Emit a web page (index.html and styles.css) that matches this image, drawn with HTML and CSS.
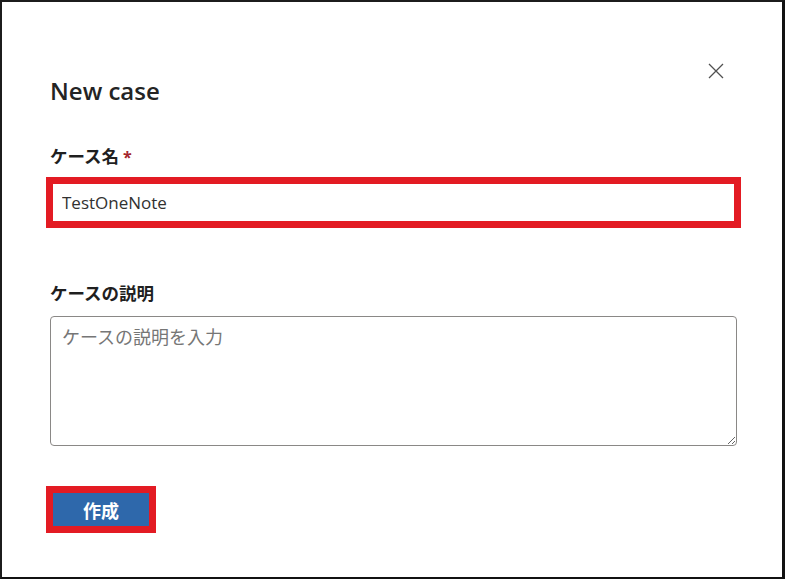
FILE: index.html
```html
<!DOCTYPE html>
<html lang="ja">
<head>
<meta charset="utf-8">
<title>New case</title>
<link rel="stylesheet" href="styles.css">
</head>
<body>
<div class="frame">
  <div class="header">
    <h1 class="title">New case</h1>
    <button class="close" aria-label="閉じる">
      <svg viewBox="0 0 16 16" width="16" height="16"><path d="M1 1L15 15M15 1L1 15" stroke="#505050" stroke-width="1.3" fill="none"/></svg>
    </button>
  </div>
  <label class="label label-name">ケース名 <span class="req">*</span></label>
  <input class="text-input highlight" type="text" value="TestOneNote">
  <label class="label label-desc">ケースの説明</label>
  <textarea class="desc" placeholder="ケースの説明を入力"></textarea>
  <button class="primary highlight">作成</button>
</div>
</body>
</html>
```
FILE: styles.css
```css
html, body {
  margin: 0;
  padding: 0;
  background: #ffffff;
}
body {
  font-family: "Open Sans", "Noto Sans CJK JP", sans-serif;
  color: #201f1e;
}
.frame {
  width: 785px;
  height: 579px;
  box-sizing: border-box;
  border-top: 2px solid #1c1c1c;
  border-left: 2px solid #1c1c1c;
  border-right: 3px solid #111111;
  border-bottom: 2px solid #111111;
  padding: 61px 45px 0 48px;
  display: flex;
  flex-direction: column;
  align-items: flex-start;
}
.header {
  display: flex;
  justify-content: space-between;
  align-items: flex-start;
  width: 687px;
}
.title {
  margin: 12px 0 0 0;
  font-size: 24px;
  line-height: 32px;
  font-weight: 600;
  color: #242424;
}
.close {
  margin: 0 13px 0 0;
  padding: 0;
  border: 0;
  background: transparent;
  width: 16px;
  height: 16px;
  display: block;
}
.close svg { display: block; }
.label {
  font-family: "Noto Sans CJK JP", sans-serif;
  font-weight: 700;
  font-size: 17.5px;
  line-height: 22px;
  color: #1f1f1f;
}
.label-name { margin-top: 38px; }
.req {
  color: #a4262c;
  font-family: "Open Sans", sans-serif;
  font-size: 16px;
}
.highlight {
  outline: 7px solid #e31b23;
  outline-offset: -3px;
}
.text-input {
  margin-top: 13px;
  width: 687px;
  height: 43px;
  box-sizing: border-box;
  border: 1px solid #8a8886;
  border-radius: 0;
  padding: 0 0 0 11px;
  font-family: "Open Sans", "Noto Sans CJK JP", sans-serif;
  font-size: 17px;
  color: #323130;
  background: #fff;
}
.label-desc { margin-top: 58px; }
.desc {
  margin-top: 12px;
  width: 687px;
  height: 130px;
  box-sizing: border-box;
  border: 1px solid #8a8886;
  border-radius: 4px;
  padding: 7px 11px;
  font-family: "Noto Sans CJK JP", sans-serif;
  font-size: 18px;
  line-height: 24px;
  color: #323130;
  resize: both;
}
.desc::placeholder { color: #767676; }
.primary {
  margin-top: 44px;
  width: 102px;
  height: 39px;
  box-sizing: border-box;
  border: 0;
  border-radius: 0;
  background: #2e68ab;
  color: #ffffff;
  font-family: "Noto Sans CJK JP", sans-serif;
  font-weight: 700;
  font-size: 18px;
  padding: 0;
}
```
